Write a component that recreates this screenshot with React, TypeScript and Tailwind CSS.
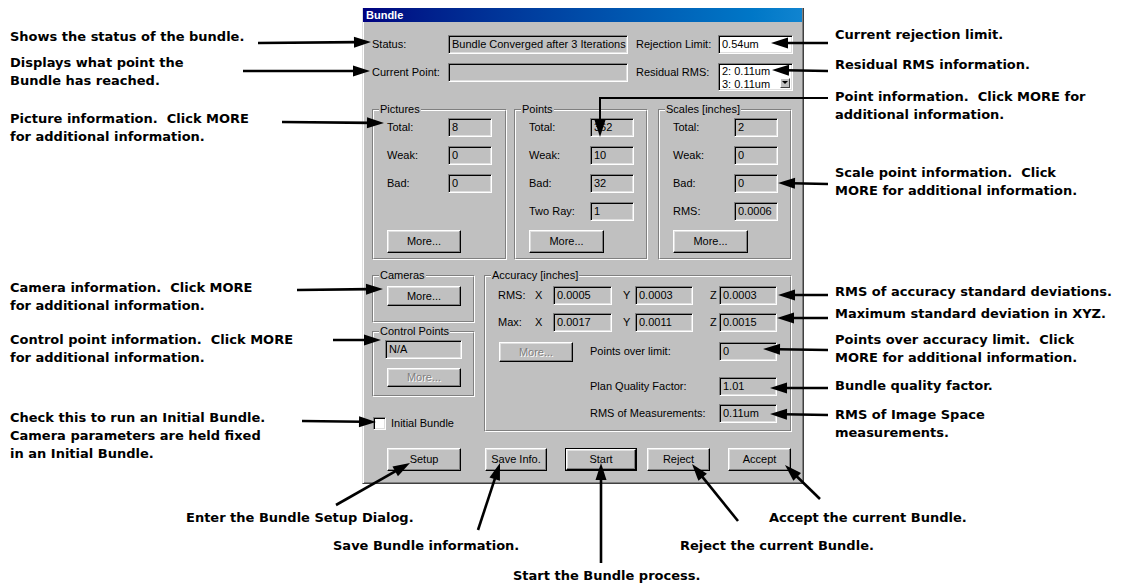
import React from "react";

type A = [number, number, number, number];

function Arrow({ a }: { a: A }) {
  const [x1, y1, x2, y2] = a;
  const dx = x2 - x1;
  const dy = y2 - y1;
  const len = Math.hypot(dx, dy);
  const ux = dx / len;
  const uy = dy / len;
  const L = 17;
  const W = 5.5;
  const bx = x2 - ux * L;
  const by = y2 - uy * L;
  const px = -uy;
  const py = ux;
  return (
    <g>
      <line x1={x1} y1={y1} x2={bx + ux * 3} y2={by + uy * 3} stroke="black" strokeWidth={2.6} />
      <polygon
        points={`${x2},${y2} ${bx + px * W},${by + py * W} ${bx - px * W},${by - py * W}`}
        fill="black"
      />
    </g>
  );
}

const arrows: A[] = [
  [258, 43, 371, 42],
  [243, 71, 370, 71],
  [282, 122, 384, 123],
  [297, 290, 383, 289],
  [333, 340, 381, 340],
  [302, 421, 376, 422],
  [828, 43, 771, 43],
  [828, 71, 772, 70],
  [828, 184, 778, 183],
  [828, 295, 778, 295],
  [828, 318, 777, 318],
  [828, 350, 763, 349],
  [828, 388, 770, 388],
  [828, 415, 770, 414],
  [336, 505, 410, 463],
  [478, 530, 500, 463],
  [601, 563, 601, 463],
  [738, 521, 692, 464],
  [820, 499, 785, 465],
];

function Field({
  children,
  className = "",
  white = false,
}: {
  children?: React.ReactNode;
  className?: string;
  white?: boolean;
}) {
  return (
    <div
      className={`h-[19px] shrink-0 border border-t-[#808080] border-l-[#808080] border-r-white border-b-white shadow-[inset_1px_1px_0_#000,inset_-1px_-1px_0_#dfdfdf] pl-[3px] text-[11px] leading-[17px] whitespace-nowrap overflow-hidden ${
        white ? "bg-white" : "bg-[#c0c0c0]"
      } ${className}`}
    >
      {children}
    </div>
  );
}

function Btn({
  children,
  className = "",
  disabled = false,
}: {
  children: React.ReactNode;
  className?: string;
  disabled?: boolean;
}) {
  return (
    <div
      className={`shrink-0 flex items-center justify-center bg-[#c0c0c0] border border-t-white border-l-white border-r-black border-b-black shadow-[inset_-1px_-1px_0_#808080,inset_1px_1px_0_#dfdfdf] text-[11px] ${
        disabled ? "text-[#808080] [text-shadow:1px_1px_0_#fff]" : "text-black"
      } ${className}`}
    >
      {children}
    </div>
  );
}

function Group({
  title,
  className = "",
  innerClass = "",
  children,
}: {
  title: string;
  className?: string;
  innerClass?: string;
  children: React.ReactNode;
}) {
  return (
    <div
      className={`relative shrink-0 border border-t-[#808080] border-l-[#808080] border-r-white border-b-white ${className}`}
    >
      <div className={`h-full border border-t-white border-l-white border-r-[#808080] border-b-[#808080] ${innerClass}`}>
        {children}
      </div>
      <div className="absolute -top-[7px] left-[6px] px-[1px] bg-[#c0c0c0] text-[11px] leading-[13px]">
        {title}
      </div>
    </div>
  );
}

function GRow({ label, value }: { label: string; value: string }) {
  return (
    <div className="flex items-center h-[19px]">
      <div className="w-[61px] text-[11px]">{label}</div>
      <Field className="w-[44px]">{value}</Field>
    </div>
  );
}

function Note({ children, className = "" }: { children: React.ReactNode; className?: string }) {
  return <div className={`whitespace-nowrap ${className}`}>{children}</div>;
}

export default function App() {
  return (
    <div className="relative w-[1131px] h-[588px] bg-white overflow-hidden text-black">
      <div className="flex h-[484px]">
        {/* left notes */}
        <div className="w-[362px] shrink-0 pl-[10px] flex flex-col font-['DejaVu_Sans',sans-serif] font-bold text-[13px] leading-[18px]">
          <Note className="mt-[28px]">Shows the status of the bundle.</Note>
          <Note className="mt-[8px]">
            Displays what point the
            <br />
            Bundle has reached.
          </Note>
          <Note className="mt-[20px]">
            Picture information.&nbsp; Click MORE
            <br />
            for additional information.
          </Note>
          <Note className="mt-[133px]">
            Camera information.&nbsp; Click MORE
            <br />
            for additional information.
          </Note>
          <Note className="mt-[16px]">
            Control point information.&nbsp; Click MORE
            <br />
            for additional information.
          </Note>
          <Note className="mt-[42px]">
            Check this to run an Initial Bundle.
            <br />
            Camera parameters are held fixed
            <br />
            in an Initial Bundle.
          </Note>
        </div>

        {/* dialog */}
        <div className="mt-[8px] w-[442px] h-[476px] shrink-0 bg-[#c0c0c0] border-x border-b border-l-[#dfdfdf] border-r-[#404040] border-b-[#404040] shadow-[inset_1px_0_0_#fff,inset_-1px_-1px_0_#808080] flex flex-col font-['Liberation_Sans',Arial,sans-serif] text-[11px]">
          <div className="h-[14px] bg-linear-to-r from-[#000080] to-[#1084d0] text-white font-bold text-[11px] leading-[14px] pl-[3px] mr-[1px]">
            Bundle
          </div>
          <div className="pl-[9px] pt-[13px] flex flex-col">
            {/* row 1 */}
            <div className="flex items-center h-[19px]">
              <div className="w-[76px] shrink-0">Status:</div>
              <Field className="w-[180px]">Bundle Converged after 3 Iterations</Field>
              <div className="w-[8px] shrink-0" />
              <div className="w-[82px] shrink-0">Rejection Limit:</div>
              <Field white className="w-[75px]">
                0.54um
              </Field>
            </div>
            {/* row 2 */}
            <div className="flex items-start mt-[9px]">
              <div className="w-[76px] h-[19px] shrink-0 flex items-center">Current Point:</div>
              <Field className="w-[180px]" />
              <div className="w-[8px] shrink-0" />
              <div className="w-[82px] h-[19px] shrink-0 flex items-center">Residual RMS:</div>
              <div className="w-[75px] h-[28px] shrink-0 flex bg-white border border-t-[#808080] border-l-[#808080] border-r-white border-b-white shadow-[inset_1px_1px_0_#000,inset_-1px_-1px_0_#dfdfdf]">
                <div className="flex-1 pl-[3px] pt-[1px] text-[11px] leading-[13px]">
                  2: 0.11um
                  <br />
                  3: 0.11um
                </div>
                <div className="w-[12px] flex flex-col justify-end pb-[2px] pr-[2px]">
                  <div className="h-[10px] w-[10px] flex items-center justify-center bg-[#c0c0c0] border border-t-white border-l-white border-r-[#404040] border-b-[#404040]">
                    <svg width="6" height="4" viewBox="0 0 6 4">
                      <polygon points="0,0 6,0 3,3" fill="black" />
                    </svg>
                  </div>
                </div>
              </div>
            </div>

            {/* groups row */}
            <div className="flex mt-[18px]">
              <Group title="Pictures" className="w-[135px] h-[151px]" innerClass="pt-[7px] pl-[13px]">
                <div className="flex flex-col gap-[9px]">
                  <GRow label="Total:" value="8" />
                  <GRow label="Weak:" value="0" />
                  <GRow label="Bad:" value="0" />
                  <div className="h-[19px]" />
                  <Btn className="w-[74px] h-[23px]">More...</Btn>
                </div>
              </Group>
              <Group title="Points" className="ml-[7px] w-[134px] h-[151px]" innerClass="pt-[7px] pl-[13px]">
                <div className="flex flex-col gap-[9px]">
                  <GRow label="Total:" value="362" />
                  <GRow label="Weak:" value="10" />
                  <GRow label="Bad:" value="32" />
                  <GRow label="Two Ray:" value="1" />
                  <Btn className="w-[75px] h-[23px]">More...</Btn>
                </div>
              </Group>
              <Group title="Scales [inches]" className="ml-[10px] w-[134px] h-[151px]" innerClass="pt-[7px] pl-[13px]">
                <div className="flex flex-col gap-[9px]">
                  <GRow label="Total:" value="2" />
                  <GRow label="Weak:" value="0" />
                  <GRow label="Bad:" value="0" />
                  <GRow label="RMS:" value="0.0006" />
                  <Btn className="w-[75px] h-[23px]">More...</Btn>
                </div>
              </Group>
            </div>

            {/* lower section */}
            <div className="flex mt-[15px]">
              <div className="w-[103px] shrink-0 flex flex-col">
                <Group title="Cameras" className="w-[103px] h-[48px]" innerClass="pt-[9px] pl-[13px]">
                  <Btn className="w-[74px] h-[20px]">More...</Btn>
                </Group>
                <Group title="Control Points" className="mt-[8px] w-[103px] h-[66px]" innerClass="pt-[7px] pl-[11px]">
                  <Field className="w-[77px]">N/A</Field>
                  <Btn disabled className="mt-[9px] ml-[2px] w-[74px] h-[19px]">
                    More...
                  </Btn>
                </Group>
                <div className="flex items-center mt-[20px] ml-[1px] h-[13px]">
                  <div className="w-[13px] h-[13px] bg-white border border-t-[#808080] border-l-[#808080] border-r-white border-b-white shadow-[inset_1px_1px_0_#000,inset_-1px_-1px_0_#dfdfdf]" />
                  <div className="ml-[5px]">Initial Bundle</div>
                </div>
              </div>

              <Group title="Accuracy [inches]" className="ml-[9px] w-[308px] h-[157px]" innerClass="pt-[9px]">
                <div className="flex items-center h-[19px] pl-[12px]">
                  <div className="w-[37px]">RMS:</div>
                  <div className="w-[18px]">X</div>
                  <Field className="w-[59px]">0.0005</Field>
                  <div className="w-[23px] pl-[11px]">Y</div>
                  <Field className="w-[58px]">0.0003</Field>
                  <div className="w-[26px] pl-[17px]">Z</div>
                  <Field className="w-[58px]">0.0003</Field>
                </div>
                <div className="flex items-center h-[19px] pl-[12px] mt-[8px]">
                  <div className="w-[37px]">Max:</div>
                  <div className="w-[18px]">X</div>
                  <Field className="w-[59px]">0.0017</Field>
                  <div className="w-[23px] pl-[11px]">Y</div>
                  <Field className="w-[58px]">0.0011</Field>
                  <div className="w-[26px] pl-[17px]">Z</div>
                  <Field className="w-[58px]">0.0015</Field>
                </div>
                <div className="flex items-start mt-[10px] pl-[13px]">
                  <Btn disabled className="w-[74px] h-[20px]">
                    More...
                  </Btn>
                  <div className="ml-[17px] w-[129px] h-[18px] flex items-center">Points over limit:</div>
                  <Field className="w-[58px] h-[18px]">0</Field>
                </div>
                <div className="flex items-center h-[18px] mt-[15px] pl-[104px]">
                  <div className="w-[129px]">Plan Quality Factor:</div>
                  <Field className="w-[58px] h-[18px]">1.01</Field>
                </div>
                <div className="flex items-center h-[18px] mt-[9px] pl-[104px]">
                  <div className="w-[129px]">RMS of Measurements:</div>
                  <Field className="w-[58px] h-[18px]">0.11um</Field>
                </div>
              </Group>
            </div>

            {/* buttons */}
            <div className="flex mt-[16px] h-[23px]">
              <Btn className="ml-[15px] w-[74px] h-[23px]">Setup</Btn>
              <Btn className="ml-[24px] w-[62px] h-[23px]">Save Info.</Btn>
              <div className="ml-[18px] w-[72px] h-[23px] border border-black flex">
                <Btn className="w-full h-full">Start</Btn>
              </div>
              <Btn className="ml-[10px] w-[63px] h-[23px]">Reject</Btn>
              <Btn className="ml-[18px] w-[63px] h-[23px]">Accept</Btn>
            </div>
          </div>
        </div>

        {/* right notes */}
        <div className="flex-1 pl-[31px] flex flex-col font-['DejaVu_Sans',sans-serif] font-bold text-[13px] leading-[18px]">
          <Note className="mt-[26px]">Current rejection limit.</Note>
          <Note className="mt-[12px]">Residual RMS information.</Note>
          <Note className="mt-[14px]">
            Point information.&nbsp; Click MORE for
            <br />
            additional information.
          </Note>
          <Note className="mt-[40px]">
            Scale point information.&nbsp; Click
            <br />
            MORE for additional information.
          </Note>
          <Note className="mt-[83px]">RMS of accuracy standard deviations.</Note>
          <Note className="mt-[4px]">Maximum standard deviation in XYZ.</Note>
          <Note className="mt-[8px]">
            Points over accuracy limit.&nbsp; Click
            <br />
            MORE for additional information.
          </Note>
          <Note className="mt-[10px]">Bundle quality factor.</Note>
          <Note className="mt-[11px]">
            RMS of Image Space
            <br />
            measurements.
          </Note>
        </div>
      </div>

      {/* bottom notes */}
      <div className="flex flex-col font-['DejaVu_Sans',sans-serif] font-bold text-[13px] leading-[18px]">
        <div className="flex mt-[25px] pl-[186px]">
          <Note className="w-[583px]">Enter the Bundle Setup Dialog.</Note>
          <Note>Accept the current Bundle.</Note>
        </div>
        <div className="flex mt-[10px] pl-[333px]">
          <Note className="w-[347px]">Save Bundle information.</Note>
          <Note>Reject the current Bundle.</Note>
        </div>
        <div className="flex mt-[12px] pl-[513px]">
          <Note>Start the Bundle process.</Note>
        </div>
      </div>

      {/* arrows overlay */}
      <svg className="absolute inset-0 pointer-events-none" width="1131" height="588" viewBox="0 0 1131 588">
        {arrows.map((a, i) => (
          <Arrow key={i} a={a} />
        ))}
        <polyline points="828,98 600,98 600,122" fill="none" stroke="black" strokeWidth={2} />
        <polygon points="600,137 594.5,120 605.5,120" fill="black" />
      </svg>
    </div>
  );
}
